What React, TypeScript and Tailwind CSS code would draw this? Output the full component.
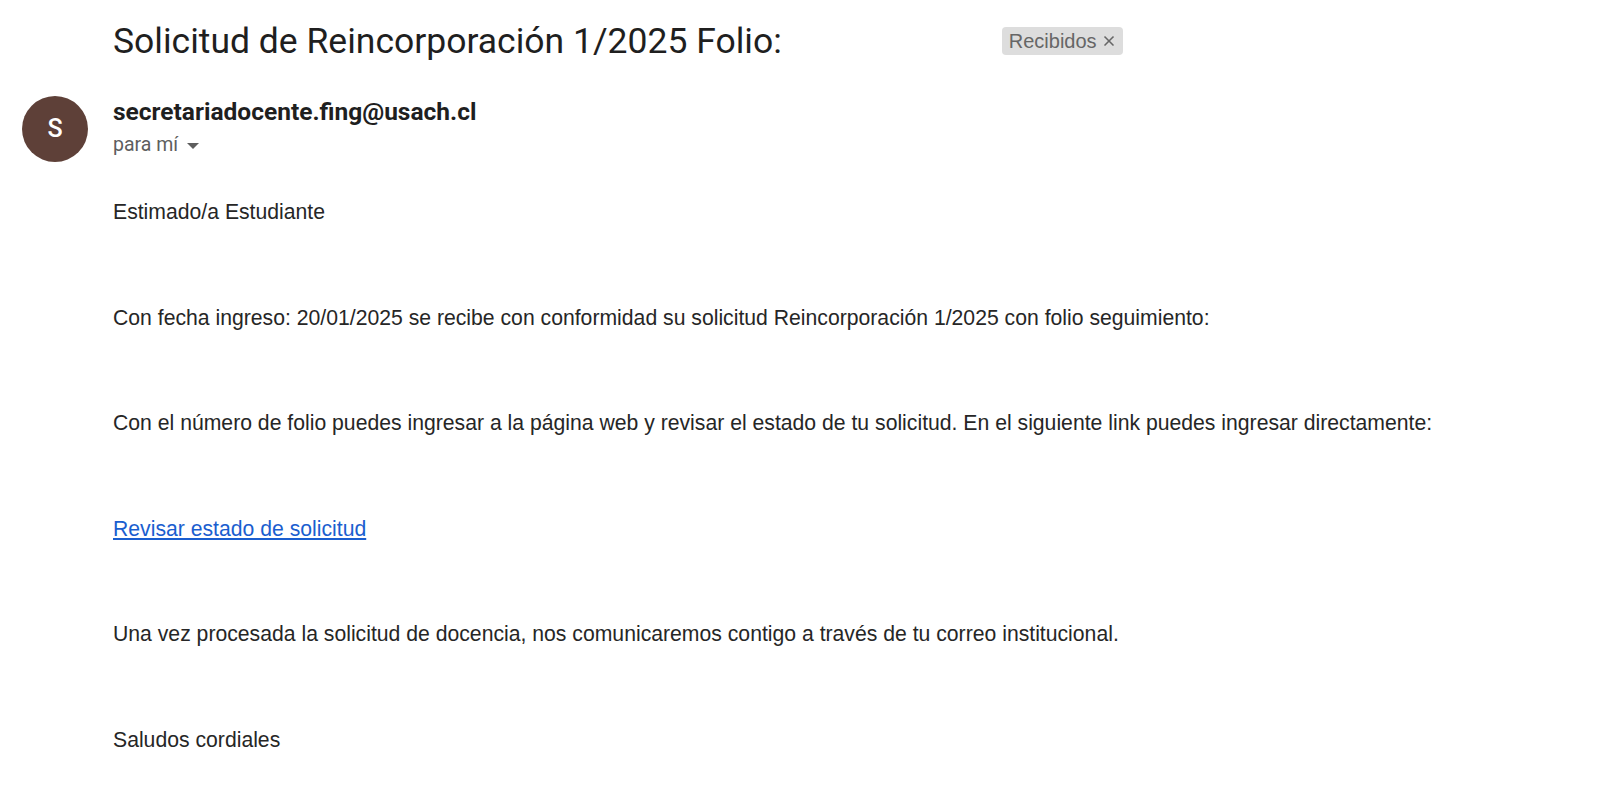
import { X } from "lucide-react";

const paragraphs = [
  "Estimado/a Estudiante",
  "Con fecha ingreso: 20/01/2025 se recibe con conformidad su solicitud Reincorporación 1/2025 con folio seguimiento:",
  "Con el número de folio puedes ingresar a la página web y revisar el estado de tu solicitud. En el siguiente link puedes ingresar directamente:",
];

const App = () => {
  return (
    <main className="min-h-screen w-[1600px] bg-white text-[#1f1f1f]">
      <div className="flex items-center pl-[113px] pt-[17px]">
        <h1 className="text-[35.5px] leading-[48px] font-['Roboto',sans-serif] font-normal text-[#1f1f1f]">
          Solicitud de Reincorporación 1/2025 Folio:
        </h1>
        <span className="ml-[220px] flex h-[28px] items-center gap-1 rounded-[4px] bg-[#dddddd] pl-[7px] pr-[6px] text-[20px] text-[#666666] font-['Liberation_Sans',sans-serif]">
          Recibidos
          <X className="h-[16px] w-[16px]" strokeWidth={2.5} />
        </span>
      </div>

      <div className="mt-[30px] flex pl-[22px]">
        <div className="mt-[1px] flex h-[66px] w-[66px] items-center justify-center rounded-full bg-[#5e4038] text-[25px] font-medium text-white font-['Roboto',sans-serif]">
          S
        </div>
        <div className="ml-[25px] flex flex-col font-['Roboto',sans-serif]">
          <div className="text-[24.5px] leading-[32px] font-bold text-[#1f1f1f] mt-[1px]">
            secretariadocente.fing@usach.cl
          </div>
          <div className="flex items-center gap-[8px] text-[19.5px] leading-[26px] text-[#5e5e5e] mt-[4px]">
            para mí
            <svg width="14" height="8" viewBox="0 0 14 8" className="mt-[2px]">
              <path d="M1 1 L7 7 L13 1 Z" fill="#5e5e5e" />
            </svg>
          </div>
        </div>
      </div>

      <div className="mt-[38px] flex flex-col gap-[81.5px] pl-[113px] font-['Liberation_Sans',sans-serif] text-[21.2px] leading-[24px] text-[#262626]">
        {paragraphs.map((p) => (
          <p key={p}>{p}</p>
        ))}
        <p>
          <a href="#" className="text-[#1a5ecf] underline">
            Revisar estado de solicitud
          </a>
        </p>
        <p>
          Una vez procesada la solicitud de docencia, nos comunicaremos contigo a través de tu correo institucional.
        </p>
        <p>Saludos cordiales</p>
      </div>
    </main>
  );
};

export default App;
